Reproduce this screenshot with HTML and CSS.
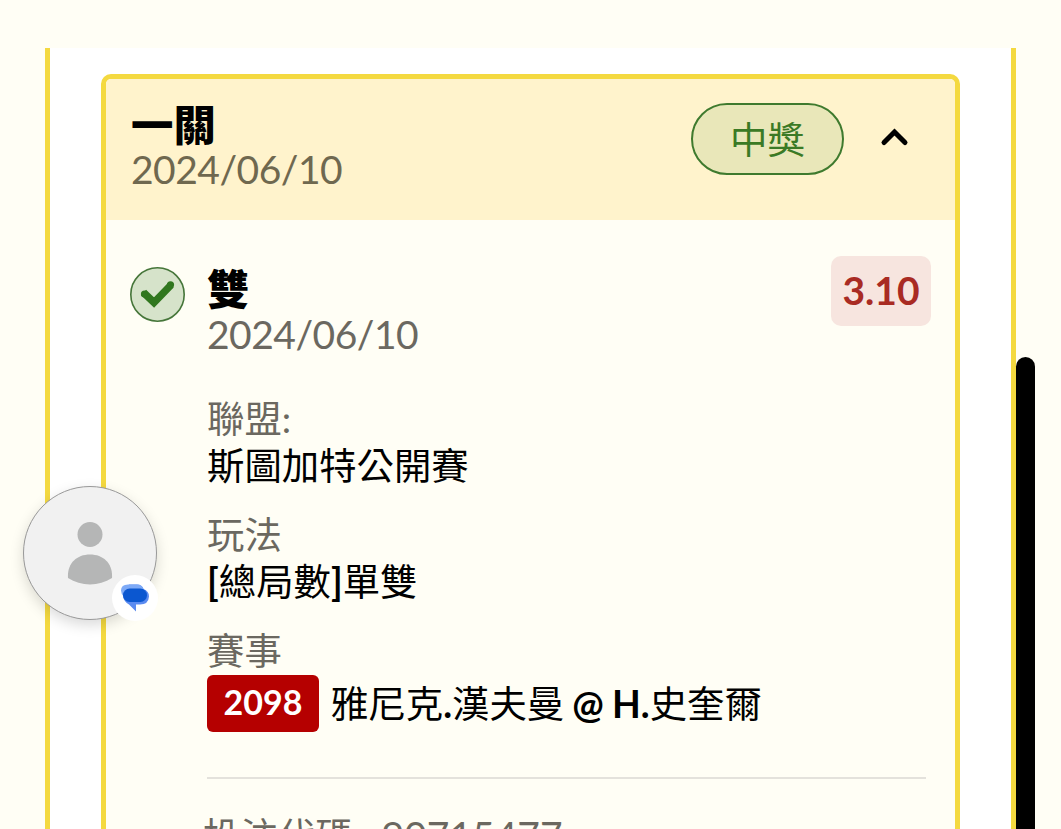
FILE: index.html
```html
<!DOCTYPE html>
<html lang="zh-Hant">
<head>
  <meta charset="UTF-8" />
  <meta name="viewport" content="width=device-width, initial-scale=1.0" />
  <title>投注紀錄</title>
  <link rel="stylesheet" href="styles.css">
</head>
<body>
  <main class="panel">
    <section class="card">
      <header class="card-header">
        <div class="heading">
          <h2 class="title">一關</h2>
          <div class="date">2024/06/10</div>
        </div>
        <span class="status">中獎</span>
        <button class="toggle" aria-label="收合">
          <svg width="30" height="22" viewBox="0 0 30 22"><path d="M4 16.5 L14.5 6 L25 16.5" fill="none" stroke="#000" stroke-width="5" stroke-linecap="round" /></svg>
        </button>
      </header>

      <div class="bet">
        <svg class="check" width="55" height="56" viewBox="0 0 55 56">
          <circle cx="27.5" cy="28.5" r="26.7" fill="#d6e3ca" stroke="#46763a" stroke-width="1.6" />
          <path d="M13.5 26.5 L24 36.5 L41 19" fill="none" stroke="#31771f" stroke-width="7.4" />
          <circle cx="14.5" cy="28" r="3.6" fill="#31771f" />
          <circle cx="40.5" cy="18.8" r="3.6" fill="#31771f" />
        </svg>
        <div class="bet-body">
          <div class="bet-top">
            <div class="heading">
              <h3 class="title">雙</h3>
              <div class="date">2024/06/10</div>
            </div>
            <span class="odds">3.10</span>
          </div>

          <dl class="details">
            <div class="detail">
              <dt>聯盟:</dt>
              <dd>斯圖加特公開賽</dd>
            </div>
            <div class="detail">
              <dt>玩法</dt>
              <dd><b>[</b>總局數<b>]</b>單雙</dd>
            </div>
            <div class="detail">
              <dt>賽事</dt>
              <dd class="match"><span class="tag">2098</span><span>雅尼克<b>.</b>漢夫曼<b> @ H.</b>史奎爾</span></dd>
            </div>
          </dl>

          <div class="code"><span>投注代碼</span><span class="code-number">90715477</span></div>
        </div>
      </div>
    </section>
  </main>

  <div class="scrollbar"></div>

  <div class="chat-head">
    <svg width="46" height="64" viewBox="0 0 46 64">
      <circle cx="23" cy="12.5" r="12.5" fill="#b5b6b6" />
      <path d="M1 56 C0 42 9 32.5 23 32.5 C37 32.5 46 42 45 56 C32 64.5 14 64.5 1 56 Z" fill="#b5b6b6" />
    </svg>
    <span class="chat-badge">
      <svg width="28" height="28" viewBox="0 0 28 28">
        <path d="M8 0.5 H16 Q21 0.5 22.5 5 Q28 7 28 12.5 Q27.5 20.5 19 20.5 H15 V27.5 L8 20.5 Q3 18 2 12 Z" fill="#5b8bf0" />
        <path d="M7 0.5 H16 Q21 0.5 22.5 5 L3 13 Q0 10 0 6.5 Q0 0.5 7 0.5 Z" fill="#7eaaf7" />
        <rect x="2" y="4.5" width="24" height="13.5" rx="6.7" fill="#0b57d0" />
      </svg>
    </span>
  </div>
</body>
</html>
```

FILE: styles.css
```css
* {
  box-sizing: border-box;
}

body {
  margin: 0;
  padding-top: 48px;
  height: 829px;
  overflow: hidden;
  background-color: #fffef5;
  color: #000;
  font-family: Lato, "Noto Sans CJK TC", sans-serif;
  font-size: 37.4px;
}

h2, h3, dl, dd {
  margin: 0;
}

.panel {
  width: 971px;
  height: 781px;
  margin-left: 45px;
  padding: 26px 51px 0;
  overflow: hidden;
  background-color: #fff;
  border: solid #f4d940;
  border-width: 0 5px;
}

.card {
  width: 859px;
  height: 830px;
  overflow: hidden;
  background-color: #fffef5;
  border: 5px solid #f4d940;
  border-radius: 10px;
}

.card-header {
  display: flex;
  align-items: flex-start;
  height: 141px;
  padding: 24px 45px 0 25px;
  background-color: #fff3cc;
}

.heading {
  flex: 1;
}

.title {
  height: 45px;
  font-size: 42.4px;
  font-weight: 900;
  line-height: 43px;
}

.date {
  font-size: 39px;
  line-height: 45px;
  letter-spacing: -0.5px;
  color: #6b6860;
}

.card-header .date {
  line-height: 43px;
  color: #6f684f;
}

.status {
  width: 153px;
  height: 72px;
  border: 2px solid #3f7a2e;
  border-radius: 36px;
  background-color: #e9e7b9;
  color: #3b7a25;
  line-height: 69px;
  text-align: center;
}

.toggle {
  display: flex;
  margin: 23px 0 0 36px;
  padding: 0;
  border: 0;
  background: none;
}

.bet {
  display: flex;
  gap: 22px;
  padding: 36px 24px 0 24px;
}

.check {
  flex: none;
  margin-top: 10px;
}

.bet-body {
  flex: 1;
}

.bet-top {
  display: flex;
  height: 139px;
}

.bet-top .heading {
  padding-top: 11px;
}

.odds {
  width: 100px;
  height: 70px;
  border-radius: 10px;
  background-color: #f7e5df;
  color: #a92b23;
  font-size: 39px;
  font-weight: 700;
  line-height: 68px;
  text-align: center;
}

.details {
  display: flex;
  flex-direction: column;
  gap: 22px;
  height: 384px;
  margin-right: 5px;
  border-bottom: 2px solid #e4e2dc;
}

.detail {
  line-height: 47px;
}

dt {
  height: 47px;
  color: #6b6860;
}

dd {
  height: 47px;
}

dd b {
  font-weight: 700;
  word-spacing: -1px;
}

.match {
  display: flex;
  align-items: center;
  gap: 12px;
  height: 58px;
}

.tag {
  width: 112px;
  height: 57px;
  border-radius: 6px;
  background-color: #b50000;
  color: #fff;
  font-size: 34px;
  font-weight: 700;
  line-height: 54px;
  text-align: center;
}

.code {
  display: flex;
  gap: 29px;
  height: 47px;
  margin: 33px 0 0 -4px;
  line-height: 47px;
  color: #6b6860;
}

.code-number {
  font-size: 39px;
}

.scrollbar {
  position: absolute;
  top: 357px;
  left: 1016px;
  width: 19px;
  height: 472px;
  border-radius: 10px 10px 0 0;
  background-color: #000;
}

/* floating chat bubble */
.chat-head {
  position: absolute;
  top: 486px;
  left: 23px;
  display: flex;
  justify-content: center;
  width: 134px;
  height: 134px;
  padding-top: 35px;
  border: 1px solid #999;
  border-radius: 50%;
  background-color: #f1f1f1;
  box-shadow: 0 5px 14px rgba(0, 0, 0, 0.15);
}

.chat-badge {
  position: absolute;
  top: 88px;
  left: 88px;
  display: flex;
  align-items: center;
  justify-content: center;
  width: 46px;
  height: 46px;
  border-radius: 50%;
  background-color: #fff;
}
```
